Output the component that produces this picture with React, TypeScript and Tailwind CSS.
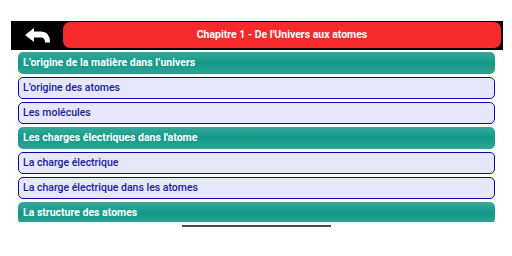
import React from "react";

type Row = { label: string; section?: boolean };

const rows: Row[] = [
  { label: "L’origine de la matière dans l’univers", section: true },
  { label: "L’origine des atomes" },
  { label: "Les molécules" },
  { label: "Les charges électriques dans l'atome", section: true },
  { label: "La charge électrique" },
  { label: "La charge électrique dans les atomes" },
  { label: "La structure des atomes", section: true },
];

function BackArrow() {
  return (
    <svg width="25" height="15" viewBox="0 0 25 15">
      <path
        d="M0 7 L9 0 L9 3.6 L16 3.6 Q25 3.6 25 14.5 L20 14.5 Q20 9.6 16 9.6 L9 9.6 L9 14 Z"
        fill="#ffffff"
      />
    </svg>
  );
}

export default function App() {
  return (
    <div className="w-[512px] h-[256px] bg-white pt-[21px] font-['Roboto',sans-serif] overflow-hidden">
      <div className="ml-[11px] mr-[9px] h-[29px] bg-black flex pt-px pb-[2px] pr-[2px]">
        <div className="w-[52px] flex items-center justify-center">
          <BackArrow />
        </div>
        <div className="flex-1 bg-[#f72a2c] rounded-[7px] flex items-center justify-center text-white font-bold text-[10.5px]">
          Chapitre 1 - De l'Univers aux atomes
        </div>
      </div>

      <div className="ml-[18px] mr-[17px] mt-[2px] h-[170px] overflow-hidden flex flex-col gap-[3px]">
        {rows.map((r) =>
          r.section ? (
            <div
              key={r.label}
              className="h-[22px] shrink-0 rounded-[5px] bg-gradient-to-b from-[#35a998] via-[#0f998a] to-[#2fa392] flex items-center px-[5px] text-white font-bold text-[10.5px]"
            >
              {r.label}
            </div>
          ) : (
            <div
              key={r.label}
              className="h-[22px] shrink-0 rounded-[5px] border-[1.5px] border-[#0a0aa8] bg-[#e7e7fb] flex items-center px-[4px] text-[#1a1a9c] font-medium text-[10.5px]"
            >
              {r.label}
            </div>
          )
        )}
      </div>

      <div className="mx-auto mt-[3px] w-[149px] h-[2px] bg-[#4a4a4a]" />
    </div>
  );
}
